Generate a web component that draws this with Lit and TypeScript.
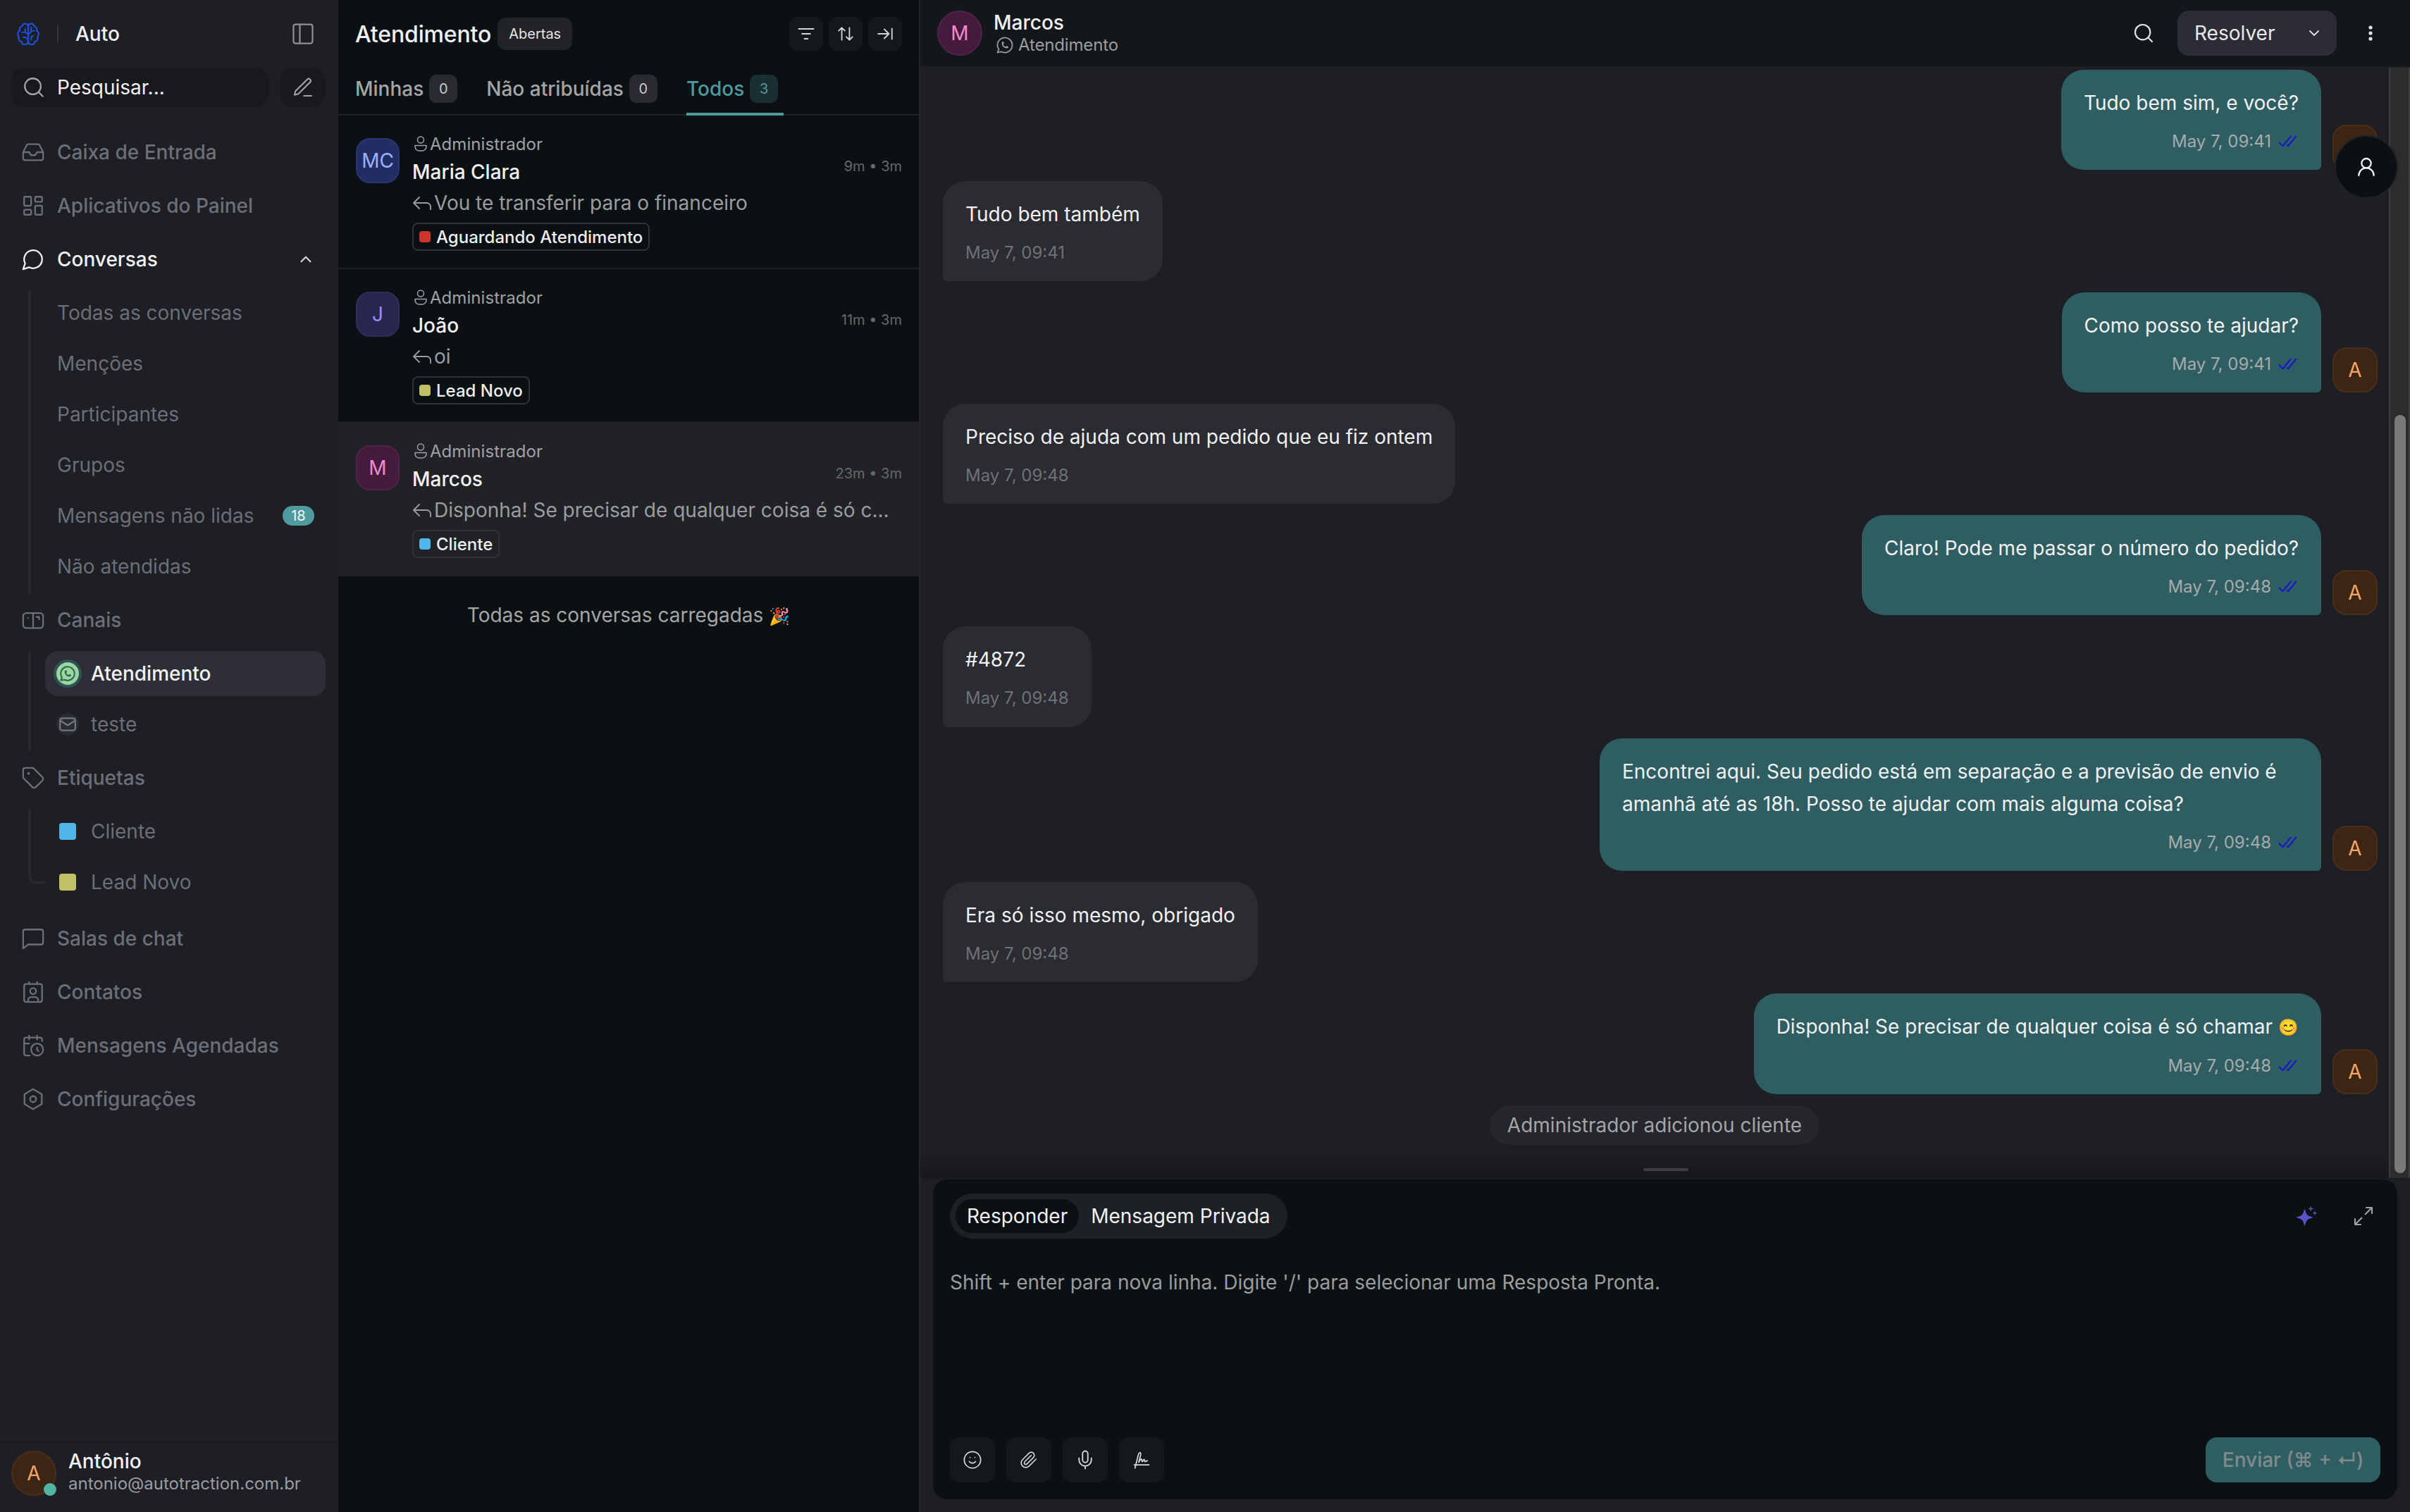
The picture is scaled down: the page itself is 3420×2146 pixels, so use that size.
import { LitElement, html, css, svg } from "lit";
import { customElement } from "lit/decorators.js";

const ic = (body: unknown, size = 28, cls = "") => html`<svg class="ic ${cls}" width=${size} height=${size} viewBox="0 0 24 24" fill="none" stroke="currentColor" stroke-width="2" stroke-linecap="round" stroke-linejoin="round">${body}</svg>`;

const I = {
  inbox: svg`<polyline points="22 12 16 12 14 15 10 15 8 12 2 12"/><path d="M5.45 5.11 2 12v6a2 2 0 0 0 2 2h16a2 2 0 0 0 2-2v-6l-3.45-6.89A2 2 0 0 0 16.76 4H7.24a2 2 0 0 0-1.79 1.11z"/>`,
  dash: svg`<rect width="7" height="9" x="3" y="3" rx="1"/><rect width="7" height="5" x="14" y="3" rx="1"/><rect width="7" height="9" x="14" y="12" rx="1"/><rect width="7" height="5" x="3" y="16" rx="1"/>`,
  chat: svg`<path d="M7.9 20A9 9 0 1 0 4 16.1L2 22Z"/>`,
  canais: svg`<rect x="2" y="5" width="20" height="15" rx="3"/><path d="M12 5v15M7 10h.01M15.5 9H18v2.5"/>`,
  tag: svg`<path d="M12.586 2.586A2 2 0 0 0 11.172 2H4a2 2 0 0 0-2 2v7.172a2 2 0 0 0 .586 1.414l8.704 8.704a2.426 2.426 0 0 0 3.42 0l6.58-6.58a2.426 2.426 0 0 0 0-3.42z"/><circle cx="7.5" cy="7.5" r=".5" fill="currentColor"/>`,
  square: svg`<path d="M22 16a2 2 0 0 1-2 2H7l-5 4V5a2 2 0 0 1 2-2h16a2 2 0 0 1 2 2z"/>`,
  contact: svg`<path d="M16 2v2M8 2v2"/><rect x="3" y="4" width="18" height="18" rx="2"/><circle cx="12" cy="11" r="3"/><path d="M7 22v-2a3 3 0 0 1 3-3h4a3 3 0 0 1 3 3v2"/>`,
  cal: svg`<path d="M21 7.5V6a2 2 0 0 0-2-2H5a2 2 0 0 0-2 2v14a2 2 0 0 0 2 2h3.5M16 2v4M8 2v4M3 10h5M17.5 17.5 16 16.3V14"/><circle cx="16" cy="16" r="6"/>`,
  gear: svg`<path d="M12 2l8.66 5v10L12 22l-8.66-5V7z"/><circle cx="12" cy="12" r="3"/>`,
  search: svg`<circle cx="11" cy="11" r="8"/><path d="m21 21-3.6-3.6"/>`,
  pen: svg`<path d="M13 21h8M16.5 3.5a2.12 2.12 0 0 1 3 3L7 19l-4 1 1-4Z"/>`,
  panel: svg`<rect x="3" y="3" width="18" height="18" rx="2"/><path d="M9 3v18"/>`,
  up: svg`<path d="m18 15-6-6-6 6"/>`,
  down: svg`<path d="m6 9 6 6 6-6"/>`,
  filter: svg`<path d="M3 6h18M7 12h10M10 18h4"/>`,
  sort: svg`<path d="m21 16-4 4-4-4M17 20V4M3 8l4-4 4 4M7 4v16"/>`,
  toLine: svg`<path d="M17 12H3M11 18l6-6-6-6M21 5v14"/>`,
  reply: svg`<path d="M21 19v-3a4 4 0 0 0-4-4H3M9 18l-6-6 6-6"/>`,
  owner: svg`<circle cx="12" cy="6.5" r="4.5"/><path d="M4 14.5h16v1.5a6 6 0 0 1-6 6h-4a6 6 0 0 1-6-6z"/>`,
  wa: svg`<path d="m3 21 1.65-3.8a9 9 0 1 1 3.4 2.9L3 21"/><path d="M9 10a.5.5 0 0 0 1 0V9a.5.5 0 0 0-1 0v1a5 5 0 0 0 5 5h1a.5.5 0 0 0 0-1h-1a.5.5 0 0 0 0 1"/>`,
  mail: svg`<rect x="2" y="4" width="20" height="16" rx="3"/><path d="m22 7-8.97 5.7a1.94 1.94 0 0 1-2.06 0L2 7"/>`,
  check: svg`<path d="M2 13l4 4L15 6M11 16l1 1 9-11"/>`,
  user: svg`<circle cx="12" cy="8" r="5"/><path d="M20 21a8 8 0 0 0-16 0"/>`,
  dots: svg`<circle cx="12" cy="4" r="1.6" fill="currentColor"/><circle cx="12" cy="12" r="1.6" fill="currentColor"/><circle cx="12" cy="20" r="1.6" fill="currentColor"/>`,
  smile: svg`<circle cx="12" cy="12" r="10"/><path d="M8 14s1.5 2 4 2 4-2 4-2M9 9h.01M15 9h.01"/>`,
  clip: svg`<path d="m21.44 11.05-9.19 9.19a6 6 0 0 1-8.49-8.49l8.57-8.57A4 4 0 1 1 18 8.84l-8.59 8.57a2 2 0 0 1-2.83-2.83l8.49-8.48"/>`,
  mic: svg`<path d="M12 2a3 3 0 0 0-3 3v7a3 3 0 0 0 6 0V5a3 3 0 0 0-3-3Z"/><path d="M19 10v2a7 7 0 0 1-14 0v-2M12 19v3"/>`,
  sign: svg`<path d="M4 22 8 6c.7-3 3-4 3-1s-2 7-2.500 10c1-2 2.500-4 3.500-4 .5 0 0 3.500 1 3s1.500-3 2.200-2.500c.6.5.3 3 1.300 2.500l2.500-1M3 18h18"/>`,
  expand: svg`<path d="M15 3h6v6M21 3l-7 7M3 21l7-7M3 15v6h6"/>`,
  spark: svg`<path d="M10 5c.9 5.400 3 7.600 8.500 8.500-5.500.9-7.600 3.100-8.500 8.500-.9-5.400-3-7.600-8.500-8.500 5.500-.9 7.600-3.100 8.500-8.500z" fill="currentColor" stroke-width="1.200"/><path d="M17 1.500v4M15 3.500h4M21.500 7v3M20 8.500h3" stroke-width="1.200"/>`,
  brain: svg`<path d="M12 4.500a3 3 0 0 0-5.900-.4 3.600 3.600 0 0 0-2.600 4.600 4 4 0 0 0-.9 6.200 3.600 3.600 0 0 0 2.700 4.900A3.400 3.400 0 0 0 12 20zM12 4.500a3 3 0 0 1 5.900-.4 3.600 3.600 0 0 1 2.600 4.600 4 4 0 0 1 .9 6.200 3.600 3.600 0 0 1-2.700 4.900A3.400 3.400 0 0 1 12 20z"/><path d="M9 7v3.500M9 10.500l3 2M5.500 10.500H8M7 15.500h2.500L12 18M15 5.500V10l-3 2.500M18 9h-2M15 18v-3l2-1" stroke-width="1.400"/>`,
};

interface Msg { out: boolean; text: unknown; time: string; wide?: boolean; }
const MSGS: Msg[] = [
  { out: true, text: "Tudo bem sim, e você?", time: "May 7, 09:41" },
  { out: false, text: "Tudo bem também", time: "May 7, 09:41" },
  { out: true, text: "Como posso te ajudar?", time: "May 7, 09:41" },
  { out: false, text: "Preciso de ajuda com um pedido que eu fiz ontem", time: "May 7, 09:48" },
  { out: true, text: "Claro! Pode me passar o número do pedido?", time: "May 7, 09:48" },
  { out: false, text: "#4872", time: "May 7, 09:48" },
  { out: true, wide: true, text: html`Encontrei aqui. Seu pedido está em separação e a previsão de envio é<br />amanhã até as 18h. Posso te ajudar com mais alguma coisa?`, time: "May 7, 09:48" },
  { out: false, text: "Era só isso mesmo, obrigado", time: "May 7, 09:48" },
  { out: true, text: html`Disponha! Se precisar de qualquer coisa é só chamar <span class="emo">😊</span>`, time: "May 7, 09:48" },
];

const ROWS = [
  { ini: "MC", av: "blue", name: "Maria Clara", time: "9m • 3m", prev: "Vou te transferir para o financeiro", label: "Aguardando Atendimento", dot: "red" },
  { ini: "J", av: "violet", name: "João", time: "11m • 3m", prev: "oi", label: "Lead Novo", dot: "olive" },
  { ini: "M", av: "pink", name: "Marcos", time: "23m • 3m", prev: "Disponha! Se precisar de qualquer coisa é só c...", label: "Cliente", dot: "sky", sel: true },
];

@customElement("app-root")
export class AppRoot extends LitElement {
  static styles = css`
    :host { display: block; width: 3420px; height: 2146px; overflow: hidden; font-family: Inter, "Liberation Sans", sans-serif; font-size: 28px; color: #f1f1f3; }
    * { box-sizing: border-box; }
    .ic { flex: none; display: block; }
    .app { display: flex; width: 3420px; height: 2146px; }

    /* sidebar */
    .side { width: 480px; flex: none; background: #1d1f24; display: flex; flex-direction: column; position: relative; }
    .brand { height: 96px; display: flex; align-items: center; padding: 0 32px 0 23px; }
    .logo { color: #1d4ed8; stroke-width: 1.6; }
    .brand .sep { width: 2px; height: 24px; background: #34363b; margin: 0 24px; }
    .brand .nm { flex: 1; font-weight: 500; }
    .panel { color: #8f9095; stroke-width: 1.5; }
    .searchrow { display: flex; gap: 16px; padding: 0 18px 0 16px; height: 56px; }
    .search { flex: 1; background: #18191d; border-radius: 18px; display: flex; align-items: center; gap: 16px; padding: 0 0 0 15px; color: #f0f0f2; }
    .search .ic, .compose .ic { color: #a2a3a7; stroke-width: 1.6; }
    .compose { width: 64px; background: #18191d; border-radius: 18px; display: flex; align-items: center; justify-content: center; }
    .nav { margin-top: 28px; display: flex; flex-direction: column; gap: 4px; }
    .item { height: 72px; display: flex; align-items: center; padding-left: 30px; gap: 17px; color: #6c6e78; font-weight: 500; flex: none; }
    .item .ic { stroke-width: 1.6; }
    .item.on { color: #f1f1f3; }
    .item .ic.chev { margin-left: auto; margin-right: 33px; color: #d8d8da; stroke-width: 2; }
    .sub { position: relative; display: flex; flex-direction: column; }
    .sub::before { content: ""; position: absolute; left: 40px; top: 4px; bottom: -3px; width: 4px; background: #28292e; border-radius: 2px; }
    .sub.channels::before { bottom: -2px; }
    .sub.labels { margin-bottom: 4px; }
    .sub.labels::before { top: 4px; bottom: 33px; width: 20px; background: none; border-left: 4px solid #28292e; border-bottom: 4px solid #28292e; border-radius: 2px 0 0 12px; }
    .si { height: 72px; display: flex; align-items: center; padding: 0 34px 0 81px; color: #6c6e78; }
    .si .badge { margin-left: auto; height: 28px; width: 45px; border-radius: 14px; background: #4f9a9f; color: #f5f7f7; font-size: 20px; display: flex; align-items: center; justify-content: center; }
    .ch { height: 72px; display: flex; align-items: center; color: #6c6e78; padding: 4px 18px 4px 64px; }
    .ch .in { flex: 1; height: 64px; display: flex; align-items: center; border-radius: 18px; padding-left: 12px; gap: 13px; }
    .ch.on .in { background: #2d2e36; color: #f1f1f3; font-weight: 500; }
    .wa { width: 40px; height: 40px; border-radius: 50%; background: #2c5354; display: flex; align-items: center; justify-content: center; }
    .wa span { width: 32px; height: 32px; border-radius: 50%; background: #9bd5a2; color: #2f6e4a; display: flex; align-items: center; justify-content: center; }
    .mailic { width: 32px; height: 32px; margin: 0 4px; border-radius: 50%; background: #2b2c32; color: #757781; display: flex; align-items: center; justify-content: center; }
    .lab { height: 72px; display: flex; align-items: center; padding-left: 84px; color: #6c6e78; gap: 21px; }
    .sq { width: 24px; height: 24px; border-radius: 4px; }
    .sky { background: #4fb6ea; }
    .olive { background: #c0c066; }
    .red { background: #c9362c; }
    .me { margin-top: auto; height: 105px; border-top: 2px solid #212328; display: flex; align-items: flex-start; padding: 16px 0 0 16px; gap: 17px; }
    .meav { position: relative; width: 64px; height: 64px; border-radius: 50%; background: #3d2514; border: 2px solid #4a2e1a; color: #f5a66a; display: flex; align-items: center; justify-content: center; flex: none; }
    .meav i { position: absolute; width: 18px; height: 18px; right: -2px; bottom: -2px; border-radius: 50%; background: #52b5a2; }
    .mename { font-weight: 500; line-height: 34px; margin-top: -2px; }
    .memail { font-size: 24px; color: #9b9ca2; line-height: 30px; }

    /* list */
    .list { width: 824px; flex: none; background: #0b1013; display: flex; flex-direction: column; }
    .lhead { height: 96px; display: flex; align-items: center; padding: 0 24px 0 24px; }
    .ltitle { font-size: 32px; font-weight: 500; letter-spacing: -0.15px; }
    .pillst { margin-left: 9px; height: 46px; width: 106px; border-radius: 12px; background: #212326; font-size: 20px; display: flex; align-items: center; justify-content: center; color: #e4e4e6; }
    .tools { margin-left: auto; display: flex; gap: 8px; }
    .tool { width: 48px; height: 48px; border-radius: 12px; background: #14181b; color: #d5d6d8; display: flex; align-items: center; justify-content: center; }
    .tool .ic { stroke-width: 1.700; }
    .tabs { height: 68px; display: flex; padding: 0 0 0 24px; gap: 41px; border-bottom: 2px solid #212427; }
    .tab { display: flex; align-items: flex-start; gap: 8px; padding-top: 10px; color: #a4a5a9; height: 68px; font-weight: 500; }
    .tab span.t { line-height: 40px; }
    .tab .n { width: 40px; height: 40px; border-radius: 10px; background: #2a2b30; font-size: 20px; color: #c8c9cc; display: flex; align-items: center; justify-content: center; font-weight: 400; }
    .tab.on { color: #4f9a9f; border-bottom: 4px solid #4f9a9f; padding-right: 8px; }
    .tab.on .n { background: #1a2f31; color: #4f9a9f; }
    .row { position: relative; height: 218px; display: flex; padding: 24px 24px 0 25px; gap: 18px; border-bottom: 2px solid #1b1e21; }
    .row.sel { background: #202226; border-bottom-color: #1b1e21; }
    .av { width: 62px; height: 64px; margin-top: 8px; border-radius: 20px; display: flex; align-items: center; justify-content: center; flex: none; font-weight: 400; border: 2px solid; }
    .av.blue { background: #212d63; border-color: #2a3672; color: #9db2ff; }
    .av.violet { background: #28264f; border-color: #302e5c; color: #9a8cff; }
    .av.pink { background: #441a3d; border-color: #51234a; color: #f08ad0; }
    .rc { min-width: 0; flex: 1; }
    .own { display: flex; align-items: center; height: 32px; font-size: 24px; color: #a0a1a6; gap: 1px; letter-spacing: 0.06px; }
    .own .ic { stroke-width: 1.500; }
    .rname { margin-top: 4px; line-height: 40px; font-weight: 500; }
    .prev { margin-top: 4px; line-height: 40px; color: #9b9ca1; display: flex; align-items: center; gap: 0; white-space: nowrap; }
    .prev .ic { stroke-width: 1.400; margin-left: -2px; margin-right: 1px; }
    .tagl { margin-top: 8px; display: inline-flex; align-items: center; height: 40px; border: 2px solid #2f3136; border-radius: 8px; padding: 0 8px 0 8px; gap: 8px; font-size: 24px; font-weight: 500; color: #ecedef; }
    .tagl i { width: 16px; height: 16px; border-radius: 4px; }
    .time { position: absolute; right: 24px; top: 58px; font-size: 20px; color: #66686e; line-height: 28px; }
    .done { margin-top: 37px; text-align: center; color: #a4a5a9; line-height: 36px; }
    .emo { font-size: 23px; vertical-align: 1px; }
    .emo2 { font-size: 24px; }

    /* chat */
    .chat { flex: 1; min-width: 0; display: flex; flex-direction: column; background: #1d1f24; border-left: 2px solid #24262a; position: relative; }
    .chead { height: 94px; flex: none; background: #14171a; display: flex; align-items: center; padding: 0 0 0 24px; }
    .cav { width: 64px; height: 64px; border-radius: 50%; background: #441a3d; border: 2px solid #51234a; color: #f08ad0; display: flex; align-items: center; justify-content: center; }
    .cinfo { margin-left: 16px; }
    .cname { font-weight: 500; line-height: 34px; }
    .cch { display: flex; align-items: center; gap: 5px; padding-left: 2px; font-size: 24px; color: #9b9ca1; line-height: 30px; letter-spacing: -0.15px; }
    .cch .ic { stroke-width: 1.500; }
    .cact { margin-left: auto; display: flex; align-items: center; }
    .cact .s { color: #e4e4e6; margin-right: 32px; stroke-width: 1.600; }
    .resolve { width: 226px; height: 64px; border-radius: 16px; background: #2b2c35; display: flex; align-items: center; justify-content: space-between; padding: 0 20px 0 24px; color: #e8e8ea; }
    .resolve .ic { color: #d8d8da; }
    .kebab { margin: 0 44px 0 36px; color: #e4e4e6; }
    .cbody { height: 1578px; flex: none; display: flex; position: relative; overflow: hidden; }
    .msgs { flex: 1; display: flex; flex-direction: column; gap: 16px; padding-top: 5px; position: relative; }
    .m { display: flex; flex: none; }
    .m.in { padding-left: 32px; }
    .m.out { justify-content: flex-end; align-items: flex-end; gap: 16px; padding-right: 16px; }
    .bub { padding: 24px 32px 24.1px; border-radius: 32px; background: #2a2c31; }
    .bub.wide { width: 1024px; }
    .m.in .bub { border-bottom-left-radius: 6px; }
    .m.out .bub { background: #2f5e62; border-bottom-right-radius: 6px; }
    .tx { line-height: 46px; }
    .meta { margin-top: 16px; font-size: 24px; line-height: 32px; color: #6f7178; display: flex; align-items: center; }
    .m.out .meta { justify-content: flex-end; color: #a6abad; gap: 9px; }
    .chk { color: #1717cc; margin-right: 0; stroke-width: 1.600; }
    .aa { width: 64px; height: 64px; border-radius: 20px; background: #3d2514; border: 2px solid #4a2e1a; color: #f5a66a; display: flex; align-items: center; justify-content: center; flex: none; }
    .sysp { align-self: center; height: 56px; border-radius: 28px; background: #24262b; color: #a4a5a9; padding: 0 25px; display: flex; align-items: center; flex: none; }
    .fade { position: absolute; left: 0; right: 0; bottom: 0; height: 36px; background: linear-gradient(to bottom, rgba(22,24,27,0), #16181b); }
    .handle { position: absolute; bottom: 10px; left: 1026px; width: 64px; height: 4px; border-radius: 2px; background: #3c3e43; }
    .bar { width: 30px; flex: none; background: #2c2c2c; border-left: 2px solid #3d3d3d; border-right: 2px solid #3d3d3d; margin-top: 2px; padding: 493px 4px 0 6px; }
    .thumb { height: 1076px; background: #7a7a7a; border-radius: 8px; }
    .float { position: absolute; left: 2007px; top: 98px; width: 90px; height: 90px; border-radius: 50%; background: #0b1013; border: 2px solid #1e2125; color: #f1f1f3; display: flex; align-items: center; justify-content: center; }
    .float .ic { stroke-width: 1.700; }
    .cwrap { flex: 1; min-height: 0; padding: 0 18px 18px 18px; border-top: 2px solid #1a1c20; }
    .comp { height: 100%; background: #0b1013; border-radius: 20px; padding: 20px 24px 24px; display: flex; flex-direction: column; }
    .ctop { display: flex; align-items: flex-start; }
    .seg { height: 64px; border-radius: 32px; background: #1c2125; display: flex; align-items: center; padding: 0 24px 0 8px; gap: 17px; }
    .seg .a { height: 48px; border-radius: 24px; background: #0b1013; padding: 0 16px; display: flex; align-items: center; }
    .sp { margin-left: auto; color: #5a52c8; margin-top: 17px; margin-right: 50px; }
    .ex { color: #a0a1a3; margin-top: 16px; margin-right: 8px; stroke-width: 1.600; }
    .ph { margin-top: 42px; line-height: 40px; color: #9b9c9f; }
    .cbot { margin-top: auto; display: flex; gap: 16px; }
    .cb { width: 64px; height: 64px; border-radius: 14px; background: #14181b; color: #d5d6d8; display: flex; align-items: center; justify-content: center; }
    .cb .ic { stroke-width: 1.500; }
    .send { margin-left: auto; width: 248px; height: 64px; border-radius: 16px; background: #2f5e62; color: #80898b; display: flex; align-items: center; justify-content: center; font-weight: 500; font-family: Inter, "DejaVu Sans", sans-serif; }
  `;

  private nav(icon: unknown, label: string, on = false, chev = false) {
    return html`<div class="item ${on ? "on" : ""}">${ic(icon, 34)}<span>${label}</span>${chev ? ic(I.up, 26, "chev") : ""}</div>`;
  }

  render() {
    return html`<div class="app">
      <aside class="side">
        <div class="brand">${ic(I.brain, 34, "logo")}<span class="sep"></span><span class="nm">Auto</span>${ic(I.panel, 36, "panel")}</div>
        <div class="searchrow">
          <div class="search">${ic(I.search, 34)}<span>Pesquisar...</span></div>
          <div class="compose">${ic(I.pen, 32)}</div>
        </div>
        <nav class="nav">
          ${this.nav(I.inbox, "Caixa de Entrada")}
          ${this.nav(I.dash, "Aplicativos do Painel")}
          ${this.nav(I.chat, "Conversas", true, true)}
          <div class="sub">
            ${["Todas as conversas", "Menções", "Participantes", "Grupos"].map((t) => html`<div class="si">${t}</div>`)}
            <div class="si">Mensagens não lidas<span class="badge">18</span></div>
            <div class="si">Não atendidas</div>
          </div>
          ${this.nav(I.canais, "Canais")}
          <div class="sub channels">
            <div class="ch on"><div class="in"><span class="wa"><span>${ic(I.wa, 26)}</span></span>Atendimento</div></div>
            <div class="ch"><div class="in"><span class="mailic">${ic(I.mail, 26)}</span>teste</div></div>
          </div>
          ${this.nav(I.tag, "Etiquetas")}
          <div class="sub labels">
            <div class="lab"><i class="sq sky"></i>Cliente</div>
            <div class="lab"><i class="sq olive"></i>Lead Novo</div>
          </div>
          ${this.nav(I.square, "Salas de chat")}
          ${this.nav(I.contact, "Contatos")}
          ${this.nav(I.cal, "Mensagens Agendadas")}
          ${this.nav(I.gear, "Configurações")}
        </nav>
        <div class="me">
          <div class="meav">A<i></i></div>
          <div><div class="mename">Antônio</div><div class="memail">antonio@autotraction.com.br</div></div>
        </div>
      </aside>

      <section class="list">
        <div class="lhead">
          <span class="ltitle">Atendimento</span><span class="pillst">Abertas</span>
          <div class="tools">
            <div class="tool">${ic(I.filter, 28)}</div>
            <div class="tool">${ic(I.sort, 26)}</div>
            <div class="tool">${ic(I.toLine, 26)}</div>
          </div>
        </div>
        <div class="tabs">
          <div class="tab"><span class="t">Minhas</span><span class="n">0</span></div>
          <div class="tab"><span class="t">Não atribuídas</span><span class="n">0</span></div>
          <div class="tab on"><span class="t">Todos</span><span class="n">3</span></div>
        </div>
        ${ROWS.map((r) => html`<div class="row ${r.sel ? "sel" : ""}">
          <div class="av ${r.av}">${r.ini}</div>
          <div class="rc">
            <div class="own">${ic(I.owner, 24)}<span>Administrador</span></div>
            <div class="rname">${r.name}</div>
            <div class="prev">${ic(I.reply, 32)}<span>${r.prev}</span></div>
            <div class="tagl"><i class=${r.dot}></i>${r.label}</div>
          </div>
          <div class="time">${r.time}</div>
        </div>`)}
        <div class="done">Todas as conversas carregadas <span class="emo2">🎉</span></div>
      </section>

      <section class="chat">
        <header class="chead">
          <div class="cav">M</div>
          <div class="cinfo">
            <div class="cname">Marcos</div>
            <div class="cch">${ic(I.wa, 28)}<span>Atendimento</span></div>
          </div>
          <div class="cact">
            ${ic(I.search, 32, "s")}
            <div class="resolve">Resolver${ic(I.down, 24)}</div>
            ${ic(I.dots, 24, "kebab")}
          </div>
        </header>
        <div class="cbody">
          <div class="msgs">
            ${MSGS.map((m) => html`<div class="m ${m.out ? "out" : "in"}">
              <div class="bub ${m.wide ? "wide" : ""}">
                <div class="tx">${m.text}</div>
                <div class="meta">${m.time}${m.out ? ic(I.check, 30, "chk") : ""}</div>
              </div>
              ${m.out ? html`<div class="aa">A</div>` : ""}
            </div>`)}
            <div class="sysp">Administrador adicionou cliente</div>
            <div class="fade"></div>
            <div class="handle"></div>
          </div>
          <div class="bar"><div class="thumb"></div></div>
          <div class="float">${ic(I.user, 32)}</div>
        </div>
        <div class="cwrap">
          <div class="comp">
            <div class="ctop">
              <div class="seg"><span class="a">Responder</span><span>Mensagem Privada</span></div>
              ${ic(I.spark, 30, "sp")}
              ${ic(I.expand, 32, "ex")}
            </div>
            <div class="ph">Shift + enter para nova linha. Digite '/' para selecionar uma Resposta Pronta.</div>
            <div class="cbot">
              <div class="cb">${ic(I.smile, 28)}</div>
              <div class="cb">${ic(I.clip, 26)}</div>
              <div class="cb">${ic(I.mic, 30)}</div>
              <div class="cb">${ic(I.sign, 28)}</div>
              <div class="send">Enviar (⌘ + ↵)</div>
            </div>
          </div>
        </div>
      </section>
    </div>`;
  }
}
